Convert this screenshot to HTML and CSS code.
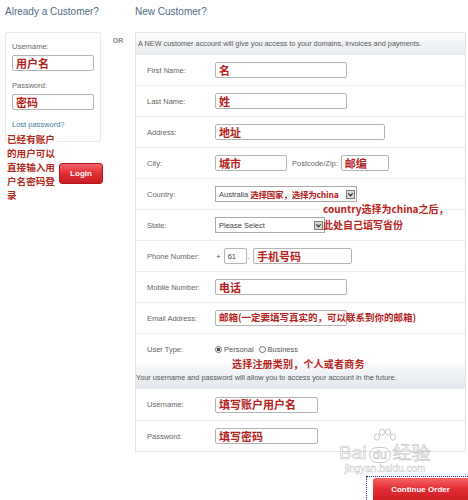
FILE: index.html
```html
<!DOCTYPE html>
<html lang="en">
<head>
  <meta charset="UTF-8">
  <meta name="viewport" content="width=device-width, initial-scale=1.0">
  <title>Order - Customer Details</title>
  <link rel="stylesheet" href="styles.css">
</head>
<body>
  <div class="page">
    <div class="login-col">
      <h2 class="title">Already a Customer?</h2>
      <div class="login-box">
        <div class="login-label">Username:</div>
        <div class="field login-field"><span class="cn">用户名</span></div>
        <div class="login-label">Password:</div>
        <div class="field login-field"><span class="cn">密码</span></div>
        <a class="lost" href="#">Lost password?</a>
      </div>
      <div class="login-extra">
        <div class="note">已经有账户<br>的用户可以<br>直接输入用<br>户名密码登<br>录</div>
        <button class="btn-login">Login</button>
      </div>
    </div>

    <div class="or">OR</div>

    <div class="signup-col">
      <h2 class="title">New Customer?</h2>
      <div class="panel">
        <div class="panel-head">A NEW customer account will give you access to your domains, invoices and payments.</div>

        <div class="row">
          <span class="label">First Name:</span>
          <div class="field w-name"><span class="cn">名</span></div>
        </div>
        <div class="row">
          <span class="label">Last Name:</span>
          <div class="field w-name"><span class="cn">姓</span></div>
        </div>
        <div class="row">
          <span class="label">Address:</span>
          <div class="field w-address"><span class="cn">地址</span></div>
        </div>
        <div class="row">
          <span class="label">City:</span>
          <div class="field w-city"><span class="cn">城市</span></div>
          <span class="label-inline">Postcode/Zip:</span>
          <div class="field w-zip"><span class="cn">邮编</span></div>
        </div>
        <div class="row">
          <span class="label">Country:</span>
          <div class="select w-country">
            <span class="select-text">Australia</span>
            <span class="cn cn-small">选择国家，选择为china</span>
            <svg class="select-arrow" width="9" height="9" viewBox="0 0 9 9"><rect x="0.5" y="0.5" width="8" height="8" fill="#d9d9d9" stroke="#7d7d7d"/><path d="M2.3 3.4 L4.5 5.8 L6.7 3.4" fill="none" stroke="#333" stroke-width="1.3"/></svg>
          </div>
        </div>
        <div class="row">
          <span class="label">State:</span>
          <div class="select w-state">
            <span class="select-text">Please Select</span>
            <svg class="select-arrow" width="9" height="9" viewBox="0 0 9 9"><rect x="0.5" y="0.5" width="8" height="8" fill="#d9d9d9" stroke="#7d7d7d"/><path d="M2.3 3.4 L4.5 5.8 L6.7 3.4" fill="none" stroke="#333" stroke-width="1.3"/></svg>
          </div>
          <div class="tip tip-state">country选择为china之后，<br>此处自己填写省份</div>
        </div>
        <div class="row">
          <span class="label">Phone Number:</span>
          <span class="phone-sign">+</span>
          <div class="field w-cc"><span class="select-text">61</span></div>
          <span class="phone-sign">.</span>
          <div class="field w-phone"><span class="cn">手机号码</span></div>
        </div>
        <div class="row">
          <span class="label">Mobile Number:</span>
          <div class="field w-name"><span class="cn">电话</span></div>
        </div>
        <div class="row">
          <span class="label">Email Address:</span>
          <div class="field w-name"><span class="cn cn-email">邮箱(一定要填写真实的，可以联系到你的邮箱)</span></div>
        </div>
        <div class="row">
          <span class="label">User Type:</span>
          <span class="radio checked"></span><span class="radio-text">Personal</span>
          <span class="radio"></span><span class="radio-text">Business</span>
          <div class="tip tip-type">选择注册类别，个人或者商务</div>
        </div>

        <div class="panel-bar">Your username and password will allow you to access your account in the future.</div>

        <div class="row">
          <span class="label">Username:</span>
          <div class="field w-user"><span class="cn">填写账户用户名</span></div>
        </div>
        <div class="row">
          <span class="label">Password:</span>
          <div class="field w-user"><span class="cn">填写密码</span></div>
        </div>
      </div>

      <div class="actions">
        <div class="focus-ring"><button class="btn-continue">Continue Order</button></div>
      </div>
    </div>
  </div>

  <div class="watermark">
    <svg class="wm-paw" width="26" height="18" viewBox="0 0 26 18">
      <ellipse cx="5" cy="9" rx="2.6" ry="3.2" fill="none" stroke="#c9c9c9"/>
      <ellipse cx="10" cy="4" rx="2.6" ry="3.2" fill="none" stroke="#c9c9c9"/>
      <ellipse cx="16" cy="4" rx="2.6" ry="3.2" fill="none" stroke="#c9c9c9"/>
      <ellipse cx="21" cy="9" rx="2.6" ry="3.2" fill="none" stroke="#c9c9c9"/>
    </svg>
    <div class="wm-logo">Bai<span class="wm-du">du</span>经验</div>
    <div class="wm-url">jingyan.baidu.com</div>
  </div>
</body>
</html>
```

FILE: styles.css
```css
body {
  margin: 0;
  width: 468px;
  height: 500px;
  overflow: hidden;
  position: relative;
  background: #fff;
  color: #666;
  font-family: "Liberation Sans", Arial, sans-serif;
  font-size: 7.5px;
}
.page {
  display: flex;
  padding: 5px 2px 0 5px;
}
.title {
  margin: 0 0 13px;
  font-size: 10px;
  line-height: 14px;
  font-weight: normal;
  color: #4f6b86;
  white-space: nowrap;
}
.cn {
  font-family: "Noto Sans CJK SC", sans-serif;
  font-weight: bold;
  font-size: 11px;
  color: #b3221c;
  line-height: 1;
}

/* left column */
.login-col {
  width: 96px;
  flex: none;
}
.login-box {
  border: 1px solid #e8e8e8;
  border-radius: 2px;
  padding: 9px 6px 11px;
}
.login-label {
  line-height: 10px;
  color: #6a6a6a;
}
.login-label + .field {
  margin-top: 3px;
}
.field + .login-label {
  margin-top: 10px;
}
.login-field {
  width: 100%;
  height: 15px;
}
.lost {
  display: block;
  margin-top: 10px;
  line-height: 10px;
  color: #3e7f98;
  text-decoration: none;
}
.login-extra {
  display: flex;
  margin-top: -10px;
}
.note {
  position: relative;
  width: 50px;
  flex: none;
  margin-left: 2px;
  background: #fff;
  font-family: "Noto Sans CJK SC", sans-serif;
  font-weight: bold;
  font-size: 9.6px;
  line-height: 14px;
  white-space: nowrap;
  color: #b02a22;
}
.btn-login {
  width: 44px;
  height: 21px;
  margin: 31px 0 0 2px;
  padding: 0;
  flex: none;
  border: 1px solid #b8161d;
  border-radius: 3px;
  background: linear-gradient(#f4666b, #e02e35 50%, #c91d24);
  color: #fff;
  font-family: "Liberation Sans", Arial, sans-serif;
  font-weight: bold;
  font-size: 8px;
}

.or {
  width: 34px;
  flex: none;
  padding-top: 31px;
  line-height: 10px;
  text-align: center;
  font-weight: bold;
  font-size: 7px;
  color: #888;
}

/* right column */
.signup-col {
  width: 331px;
  flex: none;
}
.panel {
  border: 1px solid #e4e4e4;
}
.panel-head {
  height: 21px;
  line-height: 21px;
  padding-left: 2px;
  background: linear-gradient(#fbfcfd, #e8ecf0);
  font-size: 7.3px;
  color: #5a5a5a;
  white-space: nowrap;
}
.panel-bar {
  height: 25px;
  line-height: 25px;
  box-sizing: border-box;
  padding-top: 1px;
  background: linear-gradient(#f8f9fb, #e3e8ee);
  font-size: 7.3px;
  color: #555;
  white-space: nowrap;
}
.row {
  position: relative;
  display: flex;
  align-items: center;
  height: 31px;
  box-sizing: border-box;
  padding-left: 11px;
  border-top: 1px solid #ededed;
}
.panel-bar + .row {
  border-top: none;
}
.label {
  width: 68px;
  flex: none;
  color: #666;
  white-space: nowrap;
}
.label-inline {
  margin: 0 3px 0 5px;
  color: #666;
  white-space: nowrap;
}
.field {
  display: flex;
  align-items: center;
  height: 16px;
  box-sizing: border-box;
  padding-left: 3px;
  flex: none;
  border: 1px solid #b4b4b4;
  border-radius: 2px;
  background: #fff;
  white-space: nowrap;
}
.w-name { width: 132px; }
.w-address { width: 170px; }
.w-city { width: 72px; }
.w-zip { width: 48px; }
.w-cc { width: 23px; }
.w-phone { width: 99px; }
.w-user { width: 103px; }
.cn-email {
  font-size: 9.5px;
}
.cn-small {
  font-size: 8.5px;
  margin-left: 2px;
  letter-spacing: -0.2px;
}
.select {
  display: flex;
  align-items: center;
  height: 16px;
  box-sizing: border-box;
  padding: 0 1px 0 3px;
  flex: none;
  border: 1px solid #a9a9a9;
  background: #fff;
  white-space: nowrap;
}
.w-country { width: 142px; }
.w-state { width: 110px; }
.select-text {
  font-size: 7.5px;
  color: #444;
}
.select-arrow {
  margin-left: auto;
  flex: none;
}
.phone-sign {
  margin: 0 3px 0 1px;
  font-size: 8px;
  color: #555;
}
.radio {
  width: 7px;
  height: 7px;
  box-sizing: border-box;
  flex: none;
  border: 1px solid #6f6f6f;
  border-radius: 50%;
  background: #fff;
}
.radio.checked {
  background: radial-gradient(#444 0 1.4px, #fff 1.8px);
}
.radio-text {
  margin: 0 5px 0 2px;
  font-size: 7.5px;
  color: #555;
}
.tip {
  position: absolute;
  font-family: "Noto Sans CJK SC", sans-serif;
  font-weight: bold;
  color: #b8241c;
  white-space: nowrap;
}
.tip-state {
  left: 187px;
  top: -9px;
  font-size: 10px;
  line-height: 16px;
}
.tip-type {
  left: 96px;
  top: 23px;
  font-size: 10px;
  line-height: 14px;
  letter-spacing: 0.2px;
}

.actions {
  display: flex;
  justify-content: flex-end;
  margin-top: 24px;
}
.focus-ring {
  margin-right: -2px;
  padding: 1px 0 0 6px;
  border-top: 1px dotted #272a78;
  border-left: 1px dotted #272a78;
}
.btn-continue {
  display: block;
  width: 95px;
  height: 22px;
  padding: 0;
  border: none;
  border-radius: 3px 0 0 0;
  background: linear-gradient(#f4646a, #e32c33 50%, #cf1f26);
  color: #fff;
  font-family: "Liberation Sans", Arial, sans-serif;
  font-weight: bold;
  font-size: 8px;
}

/* site watermark over the corner */
.watermark {
  position: absolute;
  left: 330px;
  top: 428px;
  width: 110px;
  text-align: center;
  color: transparent;
  -webkit-text-stroke: 0.6px #c4c4c4;
  pointer-events: none;
}
.wm-paw {
  display: block;
  margin: 0 auto -3px 42px;
}
.wm-logo {
  font-family: "Liberation Sans", Arial, sans-serif;
  font-size: 19px;
  line-height: 20px;
  white-space: nowrap;
}
.wm-du {
  display: inline-block;
  margin: 0 2px;
  padding: 0 3px;
  border: 1px solid #c9c9c9;
  border-radius: 8px;
  font-size: 13px;
  line-height: 14px;
}
.wm-url {
  font-size: 10px;
  line-height: 12px;
  -webkit-text-stroke: 0.4px #c4c4c4;
}
```
